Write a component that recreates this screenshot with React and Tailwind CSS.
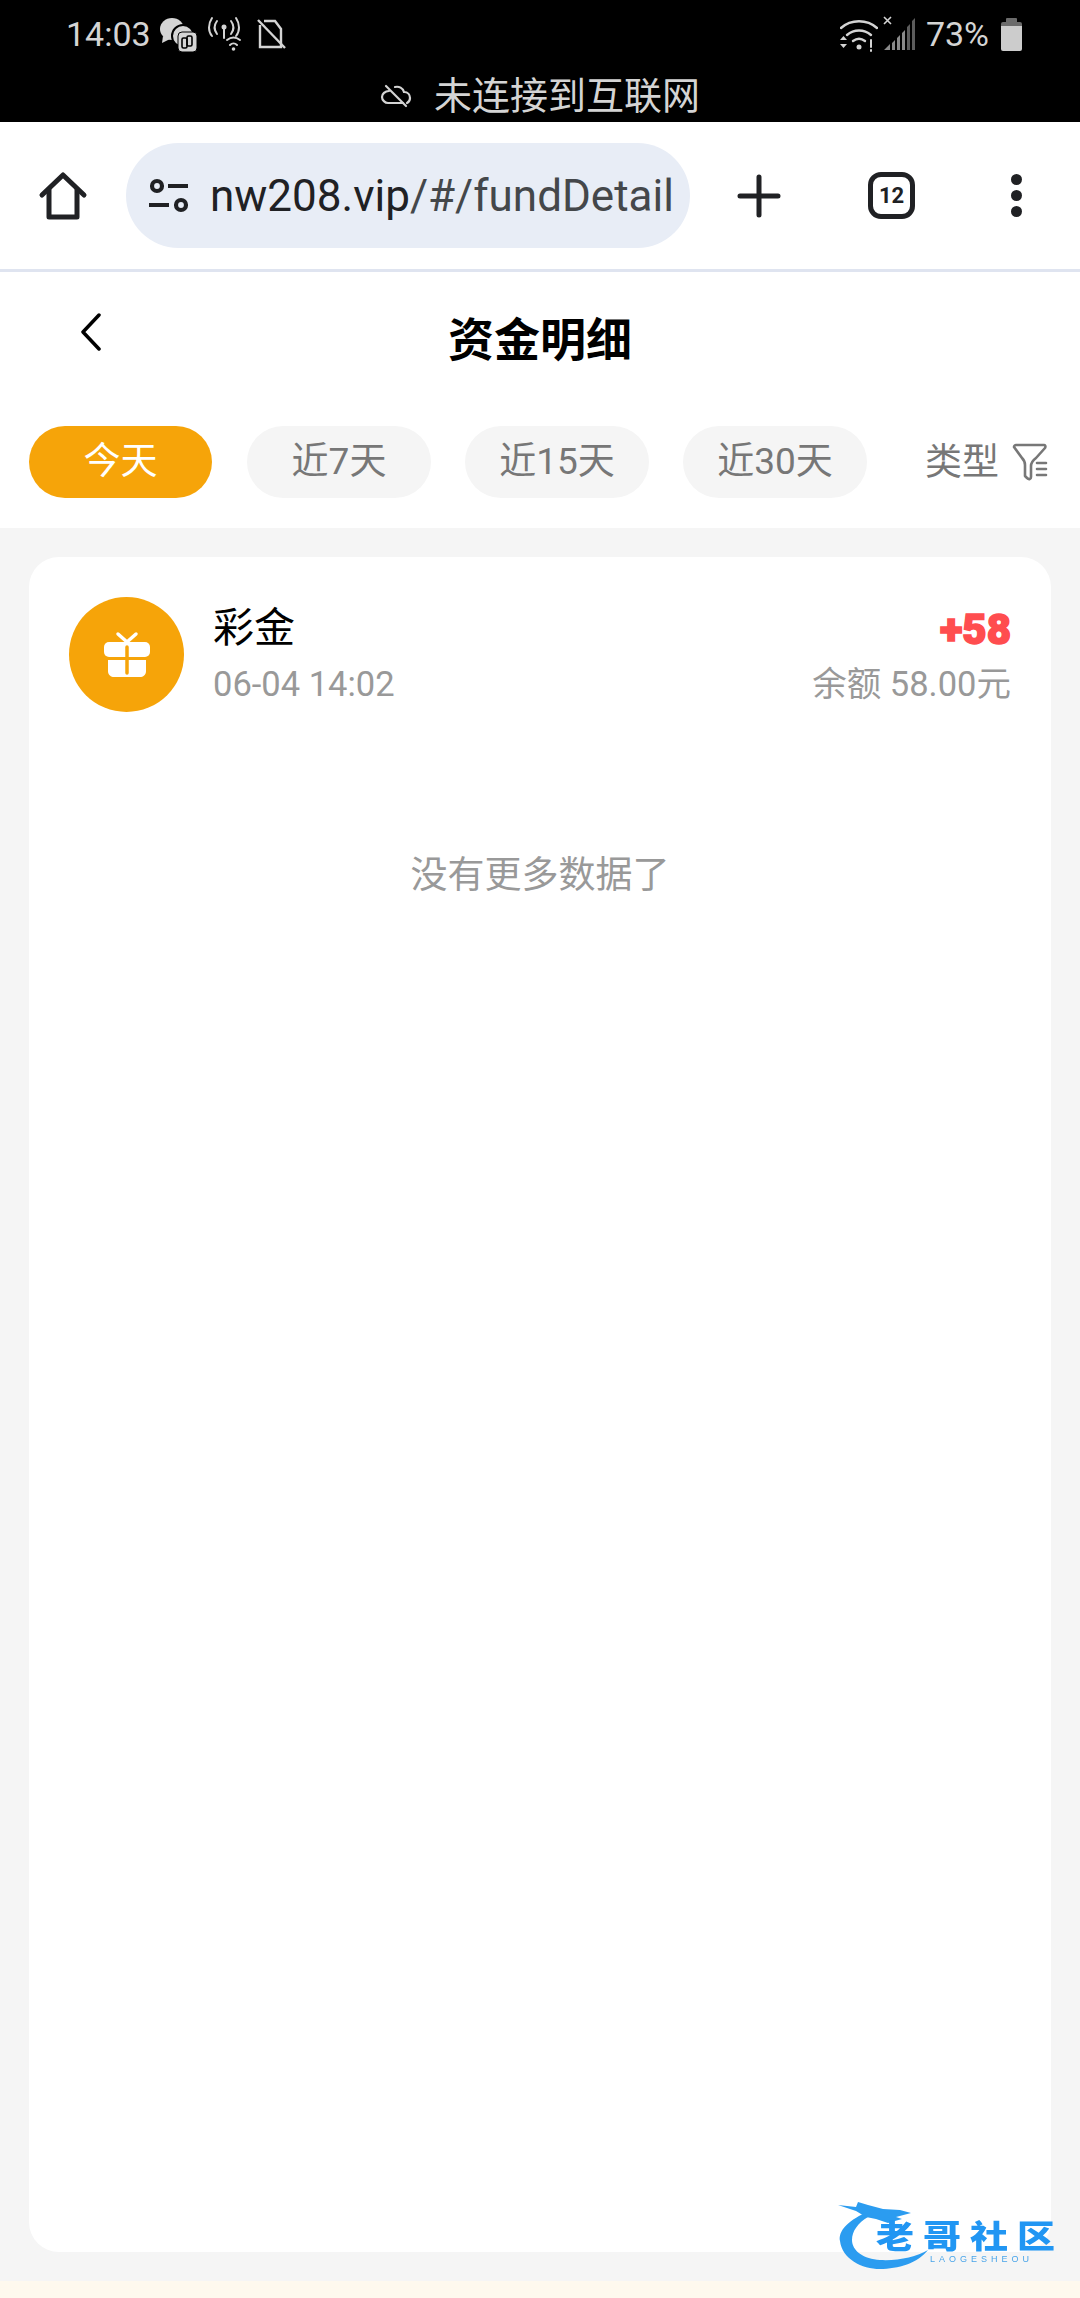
import React from 'react';

const CJK = '"Roboto","Noto Sans CJK SC",sans-serif';

const StatusBar = () => (
  <div className="h-[122px] bg-black text-[#d4d4d4] relative">
    <div className="flex items-center justify-between pl-[66px] pr-[58px] h-[68px]">
      <div className="flex items-center">
        <span className="text-[34px] leading-none">14:03</span>
        {/* wechat + dual app badge */}
        <svg className="ml-[8px]" width="38" height="36" viewBox="0 0 38 36">
          <ellipse cx="13" cy="13" rx="12" ry="11" fill="#d4d4d4" />
          <path d="M4 20 L3 27 L11 23Z" fill="#d4d4d4" />
          <circle cx="24" cy="20" r="11" fill="#d4d4d4" stroke="#000" strokeWidth="2" />
          <rect x="19" y="16" width="19" height="20" rx="4" fill="#d4d4d4" stroke="#000" strokeWidth="1" />
          <rect x="23" y="22" width="5" height="10" rx="1.5" fill="none" stroke="#000" strokeWidth="1.6" />
          <rect x="28" y="20" width="5" height="10" rx="1.5" fill="none" stroke="#000" strokeWidth="1.6" />
        </svg>
        {/* hotspot */}
        <svg className="ml-[11px]" width="36" height="36" viewBox="0 0 36 36" fill="none" stroke="#d4d4d4" strokeWidth="2" strokeLinecap="round">
          <circle cx="16" cy="11" r="2.5" fill="#d4d4d4" stroke="none" />
          <path d="M16 13v9" />
          <path d="M9 5c-3 4-3 9 0 13" />
          <path d="M23 5c3 4 3 9 0 13" />
          <path d="M4 2c-4 6-4 13 0 18" />
          <path d="M28 2c4 6 4 13 0 18" />
          <path d="M19 24c4-3 9-3 13 0" />
          <path d="M22 29c2-2 5-2 7 0" />
          <circle cx="25.500" cy="33" r="1.800" fill="#d4d4d4" stroke="none" />
        </svg>
        {/* no sim */}
        <svg className="ml-[13px]" width="30" height="32" viewBox="0 0 30 32" fill="none" stroke="#d4d4d4" strokeWidth="2.4">
          <path d="M3 7v22h21V11L18 3H7" />
          <path d="M1 2l27 28" />
        </svg>
      </div>
      <div className="flex items-center">
        {/* wifi with ! */}
        <svg width="38" height="36" viewBox="0 0 38 36" fill="none" stroke="#d4d4d4" strokeWidth="2.4" strokeLinecap="round">
          <path d="M1 12c10-9 26-9 36 0" />
          <path d="M7 19c7-6 17-6 24 0" />
          <path d="M13 25c4-3 8-3 12 0" />
          <circle cx="19" cy="31" r="2.500" fill="#d4d4d4" stroke="none" />
          <path d="M31 24v7M31 34v1" strokeWidth="2" />
          <path d="M0 24l3.500-4 3.500 4zM0 28l3.500 4 3.500-4z" fill="#d4d4d4" stroke="none" />
        </svg>
        {/* no signal */}
        <svg className="ml-[5px]" width="34" height="36" viewBox="0 0 34 36">
          <path d="M1 1l7 7M8 1L1 8" stroke="#d4d4d4" strokeWidth="1.600" />
          <path d="M1 34h6v-6zM9 34h3v-10l-3 3zM14 34h3V19l-3 3zM19 34h3V14l-3 3z" fill="#8a8a8a" />
          <path d="M24 34h3V8l-3 3zM29 34h3V2l-3 3z" fill="#5c5c5c" />
        </svg>
        <span className="ml-[9px] text-[34px] leading-none">73%</span>
        {/* battery */}
        <div className="ml-[12px] w-[21px] h-[33px] flex flex-col">
          <div className="h-[4px] mx-[5px] bg-[#6b6b6b] rounded-t-[1px]" />
          <div className="h-[4px] bg-[#6b6b6b] rounded-t-[2px]" />
          <div className="flex-1 bg-[#cccccc] rounded-b-[2px]" />
        </div>
      </div>
    </div>
    <div className="flex items-center justify-center h-[44px] text-[38px] leading-none mt-[6px]">
      <svg width="32" height="26" viewBox="0 0 32 26" fill="none" stroke="#d4d4d4" strokeWidth="2.200" strokeLinecap="round">
        <path d="M9 8C5 8 2 11 2 14s3 6 6 6h15M15 4c4-1 8 1 9 5 4 0 6 3 6 6 0 2-1 4-3 5" />
        <path d="M6 3l20 20" />
      </svg>
      <span className="ml-[22px]">未连接到互联网</span>
    </div>
  </div>
);

const BrowserBar = () => (
  <div className="h-[150px] bg-white border-b-[3px] border-[#dfe4f0] flex items-center">
    <svg className="ml-[38px]" width="50" height="50" viewBox="0 0 50 50" fill="none" stroke="#202124" strokeWidth="5" strokeLinejoin="round" strokeLinecap="round">
      <path d="M4 24L25 4l21 20" />
      <path d="M11 19v27h28V19" />
    </svg>
    <div className="ml-[38px] w-[564px] h-[105px] rounded-full bg-[#e8edf6] flex items-center pl-[22px] overflow-hidden">
      <svg width="42" height="42" viewBox="0 0 42 42" fill="none" stroke="#202124" strokeWidth="4.200">
        <circle cx="9" cy="11" r="5" />
        <path d="M20 11h20M1 30h20" />
        <circle cx="33" cy="30" r="5" />
      </svg>
      <span className="ml-[20px] text-[44px] leading-none text-[#44474a] whitespace-nowrap">
        <span className="text-[#202124]">nw208.vip</span>/#/fundDetail
      </span>
    </div>
    <svg className="ml-[47px]" width="44" height="44" viewBox="0 0 44 44" stroke="#202124" strokeWidth="5" strokeLinecap="round">
      <path d="M3 22h38M22 3v38" />
    </svg>
    <div className="ml-[87px] w-[47px] h-[47px] rounded-[13px] border-[5px] border-[#202124] flex items-center justify-center text-[22px] font-bold text-[#202124] leading-none">
      12
    </div>
    <div className="ml-[96px] flex flex-col gap-[5px]">
      <div className="w-[11px] h-[11px] rounded-full bg-[#202124]" />
      <div className="w-[11px] h-[11px] rounded-full bg-[#202124]" />
      <div className="w-[11px] h-[11px] rounded-full bg-[#202124]" />
    </div>
  </div>
);

const tabs = ['今天', '近7天', '近15天', '近30天'];

const Watermark = () => (
  <div className="absolute right-[19px] bottom-[23px] w-[223px] h-[80px] blur-[0.7px]">
    <svg className="absolute left-0 top-0" width="100" height="80" viewBox="0 0 100 80">
      <path d="M27 18C10 26 0 36 2 46C4 64 24 74 42 74C60 74 80 68 90 55C78 62 60 66 42 65C26 64 14 56 14 45C14 36 20 28 30 22Z" fill="#2b9cf0" />
      <path d="M0 10L18 12L20 7L30 10L45 14L62 15L73 18L58 22L64 24L50 28L38 24L28 22L18 16Z" fill="#2b9cf0" />
    </svg>
    <span className="absolute left-[38px] top-[23px] text-[38px] leading-none font-black tracking-[9px] scale-y-[0.85] text-[#2196f3] whitespace-nowrap origin-top-left" style={{ fontFamily: '"Noto Sans CJK SC",sans-serif' }}>
      老哥社区
    </span>
    <span className="absolute left-[92px] top-[60px] text-[9px] leading-none tracking-[4px] text-[#4aa5ea] whitespace-nowrap font-['Liberation_Sans',sans-serif]">
      LAOGESHEOU
    </span>
  </div>
);

const App = () => (
  <div className="w-[1080px] h-[2298px] relative overflow-hidden bg-[#f5f5f5] flex flex-col" style={{ fontFamily: CJK }}>
    <StatusBar />
    <BrowserBar />

    {/* Title + filter tabs */}
    <div className="h-[256px] bg-white">
      <div className="h-[154px] relative flex justify-center pt-[38px]">
        <svg className="absolute left-[80px] top-[41px]" width="22" height="38" viewBox="0 0 22 38" fill="none" stroke="#000" strokeWidth="3.500" strokeLinecap="round" strokeLinejoin="round">
          <path d="M19 2L3 19l16 17" />
        </svg>
        <span className="text-[46px] leading-[60px] font-bold text-black">资金明细</span>
      </div>
      <div className="flex items-center pl-[29px]">
        {tabs.map((tab, i) => (
          <div
            key={tab}
            className={
              i === 0
                ? 'w-[183px] h-[72px] mr-[35px] rounded-full bg-[#f6a409] text-white text-[37px] flex items-center justify-center'
                : 'w-[184px] h-[72px] mr-[34px] rounded-full bg-[#f5f5f5] text-[#777777] text-[37px] flex items-center justify-center'
            }
          >
            {tab}
          </div>
        ))}
        <span className="ml-[24px] text-[37px] text-[#777777] leading-none">类型</span>
        <svg className="ml-[13px]" width="36" height="38" viewBox="0 0 36 38" fill="none" stroke="#777777" strokeWidth="2.600" strokeLinejoin="round" strokeLinecap="round">
          <path d="M2 4c0-1 1-2 2-2h28c1 0 2 1 1 3l-9 10c-4 3-5 5-5 8v11c0 2-2 3-4 1l-2-2V22c0-3-1-5-3-7z" />
          <path d="M25 20h9M25 26h9M25 32h9" />
        </svg>
      </div>
    </div>

    {/* Record list */}
    <div className="flex-1 px-[29px] pt-[29px] pb-[29px]">
      <div className="h-full bg-white rounded-[30px] px-[40px] pt-[40px]">
        <div className="flex items-start">
          <div className="w-[115px] h-[115px] rounded-full bg-[#f6a409] flex items-center justify-center">
            <svg width="48" height="48" viewBox="0 0 48 48" fill="#fff">
              <path d="M15 3l9 8 9-8" fill="none" stroke="#fff" strokeWidth="3.500" strokeLinecap="round" />
              <rect x="1" y="11" width="46" height="15" rx="5" />
              <path d="M5 29h38v11c0 4-3 6-6 6H11c-3 0-6-2-6-6z" />
              <path d="M24 16v26" stroke="#f6a409" strokeWidth="3.500" strokeLinecap="round" />
              <path d="M1 27.500h46" stroke="#f6a409" strokeWidth="3" />
            </svg>
          </div>
          <div className="ml-[29px] flex-1">
            <div className="text-[41px] leading-[56px] mt-[3px] text-black">彩金</div>
            <div className="mt-[4px] text-[34.500px] leading-[48px] text-[#999999]">06-04 14:02</div>
          </div>
          <div className="text-right">
            <div className="text-[42px] leading-[56px] mt-[5px] text-[#ff4d4f] font-black [-webkit-text-stroke:1.5px_#ff4d4f]">+58</div>
            <div className="mt-[2px] text-[34.500px] leading-[48px] text-[#999999]">余额 58.00元</div>
          </div>
        </div>
        <div className="mt-[140px] text-center text-[37px] leading-[48px] text-[#999999]">没有更多数据了</div>
      </div>
    </div>

    <div className="h-[17px] bg-[#fef9ee]" />
    <Watermark />
  </div>
);

export default App;
